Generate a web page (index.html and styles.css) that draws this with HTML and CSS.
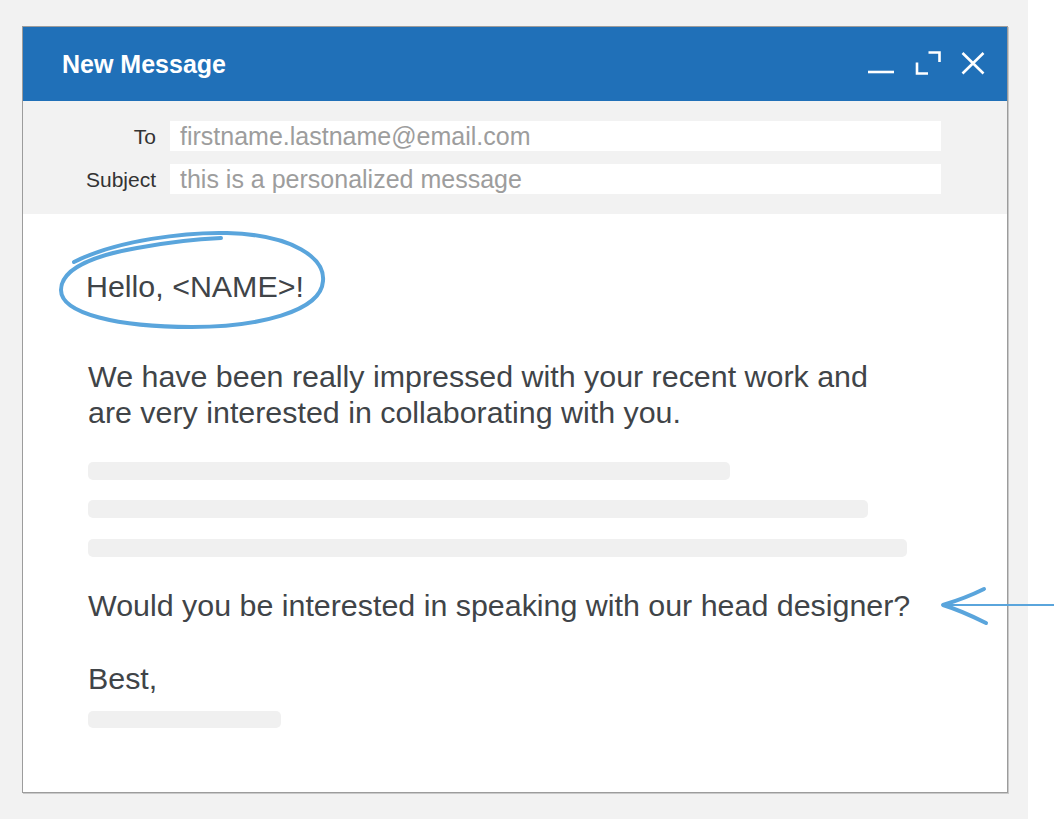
FILE: index.html
```html
<!DOCTYPE html>
<html>
<head>
	<meta charset="utf-8">
	<title>New Message</title>
	<link rel="stylesheet" href="styles.css">
</head>
<body>
	<div class="stage">
		<div class="window">
			<div class="titlebar">
				<h2>New Message</h2>
				<div class="controls">
					<svg class="icon-min" width="28" height="28" viewBox="0 0 28 28"><path d="M1,21 H27"/></svg>
					<svg class="icon-max" width="26" height="28" viewBox="0 0 26 28"><path d="M2,11.5 V22.5 H13 M13.5,1.5 H24.5 V11"/></svg>
					<svg class="icon-close" width="24" height="28" viewBox="0 0 24 28"><path d="M1.5,2 L22.5,22.5 M22.5,2 L1.5,22.5"/></svg>
				</div>
			</div>
			<div class="fields">
				<label>To</label>
				<div class="field">firstname.lastname@email.com</div>
				<label>Subject</label>
				<div class="field">this is a personalized message</div>
			</div>
			<div class="body">
				<p class="greeting">Hello, &lt;NAME&gt;!
					<svg class="circle" width="276" height="108" viewBox="0 0 276 108">
						<path d="M17,36 C60,14 130,6 170,7 C238,9 268,33 266,55 C264,86 200,101 135,101 C62,101 4,88 4,64 C4,44 34,30 80,22 C112,16 140,13 164,12"/>
					</svg>
				</p>
				<p class="intro">We have been really impressed with your recent work and<br>are very interested in collaborating with you.</p>
				<div class="line line-one"></div>
				<div class="line line-two"></div>
				<div class="line line-three"></div>
				<p class="question">Would you be interested in speaking with our head designer?
					<svg class="arrow" width="120" height="40" viewBox="0 0 120 40">
						<path class="shaft" d="M4,19 H120"/>
						<path class="head" d="M44,3 C32,9 16,15 3,19 C16,23 32,30 46,37"/>
					</svg>
				</p>
				<p class="signoff">Best,</p>
				<div class="line signature"></div>
			</div>
		</div>
	</div>
</body>
</html>
```

FILE: styles.css
```css
*{
	margin:0;
	padding:0;
	box-sizing:border-box;
	font-family:"Liberation Sans", Arial, sans-serif;
}

body{
	background:white;
}

.stage{
	width:1028px;
	height:819px;
	background:#f2f2f2;
	padding:26px 0 0 22px;
}

.window{
	width:986px;
	height:767px;
	background:white;
	border:1px solid #9c9c9c;
	box-shadow:1px 1px 0 #c9c9c9;
}

.titlebar{
	height:74px;
	background:#2070b8;
	display:flex;
	align-items:center;
	justify-content:space-between;
	padding:0 22px 0 39px;
}

.titlebar h2{
	color:white;
	font-size:25px;
	font-weight:bold;
	margin-top:1px;
}

.controls{
	display:flex;
	gap:20px;
	margin-top:1px;
}

.controls svg{
	display:block;
	fill:none;
	stroke:white;
	stroke-width:2.6;
}

.fields{
	background:#f2f2f2;
	display:grid;
	grid-template-columns:133px 771px;
	grid-auto-rows:30px;
	column-gap:14px;
	row-gap:13px;
	padding:20px 0 20px 0;
}

.fields label{
	font-size:21px;
	line-height:32px;
	color:#333;
	text-align:right;
}

.fields .field{
	background:white;
	line-height:30px;
	padding-left:10px;
	font-size:25px;
	color:#9d9d9d;
}

.body{
	padding:54px 0 0 65px;
	color:#404448;
}

.body p{
	font-size:30.4px;
	line-height:36px;
}

.greeting{
	position:relative;
	margin-left:-2px;
	width:max-content;
}

.circle{
	position:absolute;
	left:-29px;
	top:-42px;
	fill:none;
	stroke:#5aa5dc;
	stroke-width:4;
	stroke-linecap:round;
}

.intro{
	margin-top:54px;
}

.line{
	height:18px;
	background:#f0f0f0;
	border-radius:5px;
}

.line-one{
	width:642px;
	margin-top:32px;
}

.line-two{
	width:780px;
	margin-top:20px;
}

.line-three{
	width:819px;
	margin-top:21px;
}

.question{
	position:relative;
	margin-top:30px;
}

.arrow{
	position:absolute;
	left:852px;
	top:-1px;
	fill:none;
	stroke:#5aa5dc;
	stroke-linecap:round;
}

.arrow .shaft{
	stroke-width:2;
}

.arrow .head{
	stroke-width:4;
	stroke-linejoin:round;
}

.signoff{
	margin-top:37px;
}

.signature{
	width:193px;
	height:17px;
	margin-top:15px;
}
```
